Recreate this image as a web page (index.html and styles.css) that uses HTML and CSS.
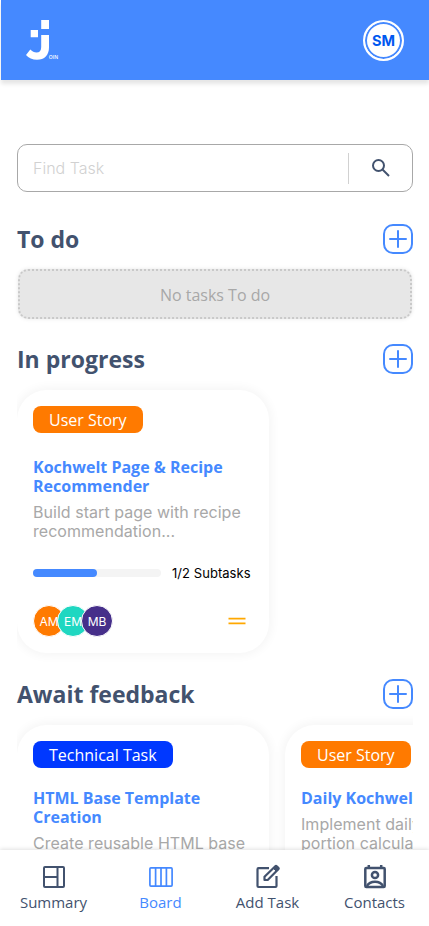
FILE: index.html
```html
<!DOCTYPE html>
<html lang="en">
<head>
<meta charset="utf-8">
<meta name="viewport" content="width=device-width, initial-scale=1">
<title>Join - Board</title>
<link rel="stylesheet" href="styles.css">
</head>
<body>
<header class="header">
  <svg class="logo" width="34" height="42" viewBox="0 0 34 42" role="img" aria-label="Join">
    <path fill="#fff" d="M16.200 1H24v9h-7.800zM5.700 11H13v7.300H5.700zM16.200 16H24v12.500c0 7.500-4.500 12.300-12 12.300-4.500 0-8.500-1.800-11-4.800l4.300-5.500c2 2.100 3.800 3 6.200 3 3 0 4.700-1.800 4.700-5.500z"/>
    <text class="logo-text" x="23.800" y="39.500" textLength="9.400" lengthAdjust="spacingAndGlyphs">OIN</text>
  </svg>
  <div class="profile">SM</div>
</header>
<main class="board">
  <label class="search">
    <input class="search-input" type="text" placeholder="Find Task">
    <span class="search-icon"><svg width="20" height="20" viewBox="0 0 20 20" fill="none" stroke="#42526e" stroke-width="2"><circle cx="7.500" cy="7.500" r="5.500"/><path d="M11.500 11.500L18 18"/></svg></span>
  </label>

  <section class="column">
    <div class="column-head"><h2>To do</h2><button class="add" aria-label="Add task"><svg width="30" height="30" viewBox="0 0 30 30"><rect x="1" y="1" width="28" height="28" rx="9"/><path d="M15 7v16M7 15h16"/></svg></button></div>
    <div class="empty">No tasks To do</div>
  </section>

  <section class="column">
    <div class="column-head"><h2>In progress</h2><button class="add" aria-label="Add task"><svg width="30" height="30" viewBox="0 0 30 30"><rect x="1" y="1" width="28" height="28" rx="9"/><path d="M15 7v16M7 15h16"/></svg></button></div>
    <div class="cards">
      <article class="card">
        <span class="tag">User Story</span>
        <h3 class="title">Kochwelt Page &amp; Recipe Recommender</h3>
        <p class="description">Build start page with recipe recommendation...</p>
        <div class="progress"><div class="track"><div class="fill"></div></div><span>1/2 Subtasks</span></div>
        <div class="card-foot">
          <div class="people"><span class="person orange">AM</span><span class="person teal">EM</span><span class="person purple">MB</span></div>
          <svg width="18" height="8" viewBox="0 0 18 8" stroke="#ffa800" stroke-width="1.800"><path d="M.5 1.700h17M.5 6.300h17"/></svg>
        </div>
      </article>
    </div>
  </section>

  <section class="column">
    <div class="column-head"><h2>Await feedback</h2><button class="add" aria-label="Add task"><svg width="30" height="30" viewBox="0 0 30 30"><rect x="1" y="1" width="28" height="28" rx="9"/><path d="M15 7v16M7 15h16"/></svg></button></div>
    <div class="cards compact">
      <article class="card">
        <span class="tag technical">Technical Task</span>
        <h3 class="title">HTML Base Template Creation</h3>
        <p class="description">Create reusable HTML base templates...</p>
      </article>
      <article class="card">
        <span class="tag">User Story</span>
        <h3 class="title">Daily Kochwelt Recipe</h3>
        <p class="description">Implement daily recipe and portion calculator...</p>
      </article>
    </div>
  </section>
</main>
<nav class="nav">
  <a class="nav-item"><svg width="26" height="26" viewBox="0 0 26 26" fill="none" stroke="currentColor" stroke-width="2"><rect x="3" y="3" width="20" height="20" rx="1"/><path d="M16.500 3v20M3 13h13.500"/></svg>Summary</a>
  <a class="nav-item active"><svg width="26" height="26" viewBox="0 0 26 26" fill="none" stroke="currentColor" stroke-width="1.700"><rect x="1.900" y="3.900" width="22.200" height="18.200" rx="1"/><path d="M7.600 4v18M13 4v18M18.400 4v18"/></svg>Board</a>
  <a class="nav-item"><svg width="26" height="26" viewBox="0 0 26 26" fill="none" stroke="currentColor" stroke-width="2.200"><path d="M14 4.200H3.500a1 1 0 0 0-1 1V22a1 1 0 0 0 1 1h17a1 1 0 0 0 1-1V12"/><path d="M9.500 16v-3.300L20.300 2.200a1 1 0 0 1 1.400 0L23.300 3.800a1 1 0 0 1 0 1.400L12.700 16z" stroke-linejoin="round"/><path d="M18.200 4.200l3.200 3.200 2.300-2.500L20.800 1.800z" fill="currentColor" stroke-width="1"/></svg>Add Task</a>
  <a class="nav-item"><svg width="26" height="26" viewBox="0 0 26 26" fill="none" stroke="currentColor" stroke-width="2.500"><rect x="3.300" y="4" width="19.400" height="19" rx="1"/><path d="M6.800 1v3M19.200 1v3"/><circle cx="13" cy="11" r="3.100"/><path d="M5 22c1.500-2.800 4.500-4.200 8-4.200s6.500 1.400 8 4.200"/></svg>Contacts</a>
</nav>
</body>
</html>
```
FILE: styles.css
```css
* { box-sizing: border-box; }
body {
  display: flex;
  flex-direction: column;
  height: 926px;
  margin: 0;
  overflow: hidden;
  background: #fff;
  color: #42526e;
  font-family: "Open Sans", sans-serif;
}
h2, h3, p { margin: 0; }
.header {
  display: flex;
  flex: none;
  align-items: center;
  justify-content: space-between;
  height: 80px;
  margin: 0 .5px;
  padding: 0 24.500px;
  background: #4589ff;
  box-shadow: 0 4px 4px rgba(0, 0, 0, .1);
}
.logo-text { fill: #fff; font: 600 6px "Open Sans", sans-serif; }
.profile {
  display: grid;
  place-items: center;
  width: 41px;
  height: 41px;
  border: 2px solid #fff;
  border-radius: 50%;
  background: #fff;
  box-shadow: inset 0 0 0 2px #4589ff;
  color: #0058f0;
  font: 700 14.500px Inter, sans-serif;
}
.board { flex: 1; min-height: 0; padding: 64px 16px 0 17px; overflow: hidden; }
.search {
  display: flex;
  align-items: center;
  height: 48px;
  border: 1px solid #a8a8a8;
  border-radius: 10px;
}
.search-input {
  flex: 1;
  min-width: 0;
  height: 30px;
  padding: 0 15px;
  border: 0;
  outline: 0;
  background: none;
  font: 16px Inter, sans-serif;
}
.search-input::placeholder { color: #d1d1d1; font-weight: 300; }
.search-icon {
  display: grid;
  place-items: center;
  width: 64px;
  height: 31px;
  border-left: 1px solid #d1d1d1;
}
.column { margin-top: 32px; }
.column-head { display: flex; align-items: center; justify-content: space-between; height: 30px; }
.column-head h2 { font-size: 23px; font-weight: 700; line-height: 30px; }
.add { display: flex; padding: 0; border: 0; background: none; }
.add svg { fill: none; stroke: #4589ff; stroke-width: 2; stroke-linecap: round; }
.empty {
  display: grid;
  place-items: center;
  height: 50px;
  margin: 15px 1px 25px;
  padding-top: 1px;
  border: 2px dotted #c9c9c9;
  border-radius: 10px;
  background: #e7e7e7;
  box-shadow: 0 0 4px rgba(0, 0, 0, .09);
  color: #a8a8a8;
  font-size: 16px;
}
.column + .column { margin-top: 16px; }
.cards { display: flex; gap: 16px; padding: 16px 0 10px; overflow: hidden; }
.compact { padding-top: 16px; }
.card {
  display: flex;
  flex: none;
  flex-direction: column;
  align-items: flex-start;
  width: 252px;
  height: 263px;
  padding: 16px;
  border-radius: 30px;
  background: #fff;
  box-shadow: 0 0 10px 3px rgba(0, 0, 0, .04);
}
.tag {
  height: 27px;
  padding: 0 16px;
  border-radius: 8px;
  background: #ff7a00;
  color: #fff;
  font-size: 16px;
  line-height: 28px;
}
.technical { background: #0038ff; }
.title { margin-top: 25px; color: #4589ff; font-size: 16px; font-weight: 700; line-height: 19px; }
.compact .title { margin-top: 21px; }
.description { margin-top: 7px; color: #a8a8a8; font: 16px/19px Inter, sans-serif; letter-spacing: .04px; }
.progress {
  display: flex;
  align-items: center;
  gap: 11px;
  height: 16px;
  margin-top: 24px;
  color: #000;
  font: 13px Inter, sans-serif;
  letter-spacing: .05px;
  white-space: nowrap;
}
.track { width: 128px; height: 8px; border-radius: 4px; background: #f4f4f4; }
.fill { width: 50%; height: 8px; border-radius: 4px; background: #4589ff; }
.card-foot {
  display: flex;
  align-items: center;
  justify-content: space-between;
  align-self: stretch;
  margin-top: 24px;
  padding-right: 7px;
}
.people { display: flex; }
.person {
  display: grid;
  place-items: center;
  width: 32px;
  height: 32px;
  border: 1px solid #fff;
  border-radius: 50%;
  color: #fff;
  font: 12px Inter, sans-serif;
}
.person + .person { margin-left: -8px; }
.orange { background: #ff7a00; }
.teal { background: #1fd7c1; }
.purple { background: #462f8a; }
.nav {
  z-index: 1;
  display: flex;
  flex: none;
  height: 76px;
  padding-right: 1px;
  background: #fff;
  box-shadow: 0 -1px 4px rgba(0, 0, 0, .12);
}
.nav-item {
  display: flex;
  flex: 1;
  flex-direction: column;
  align-items: center;
  padding-top: 14px;
  font-size: 15px;
  line-height: 24px;
}
.active { color: #4589ff; }
```
